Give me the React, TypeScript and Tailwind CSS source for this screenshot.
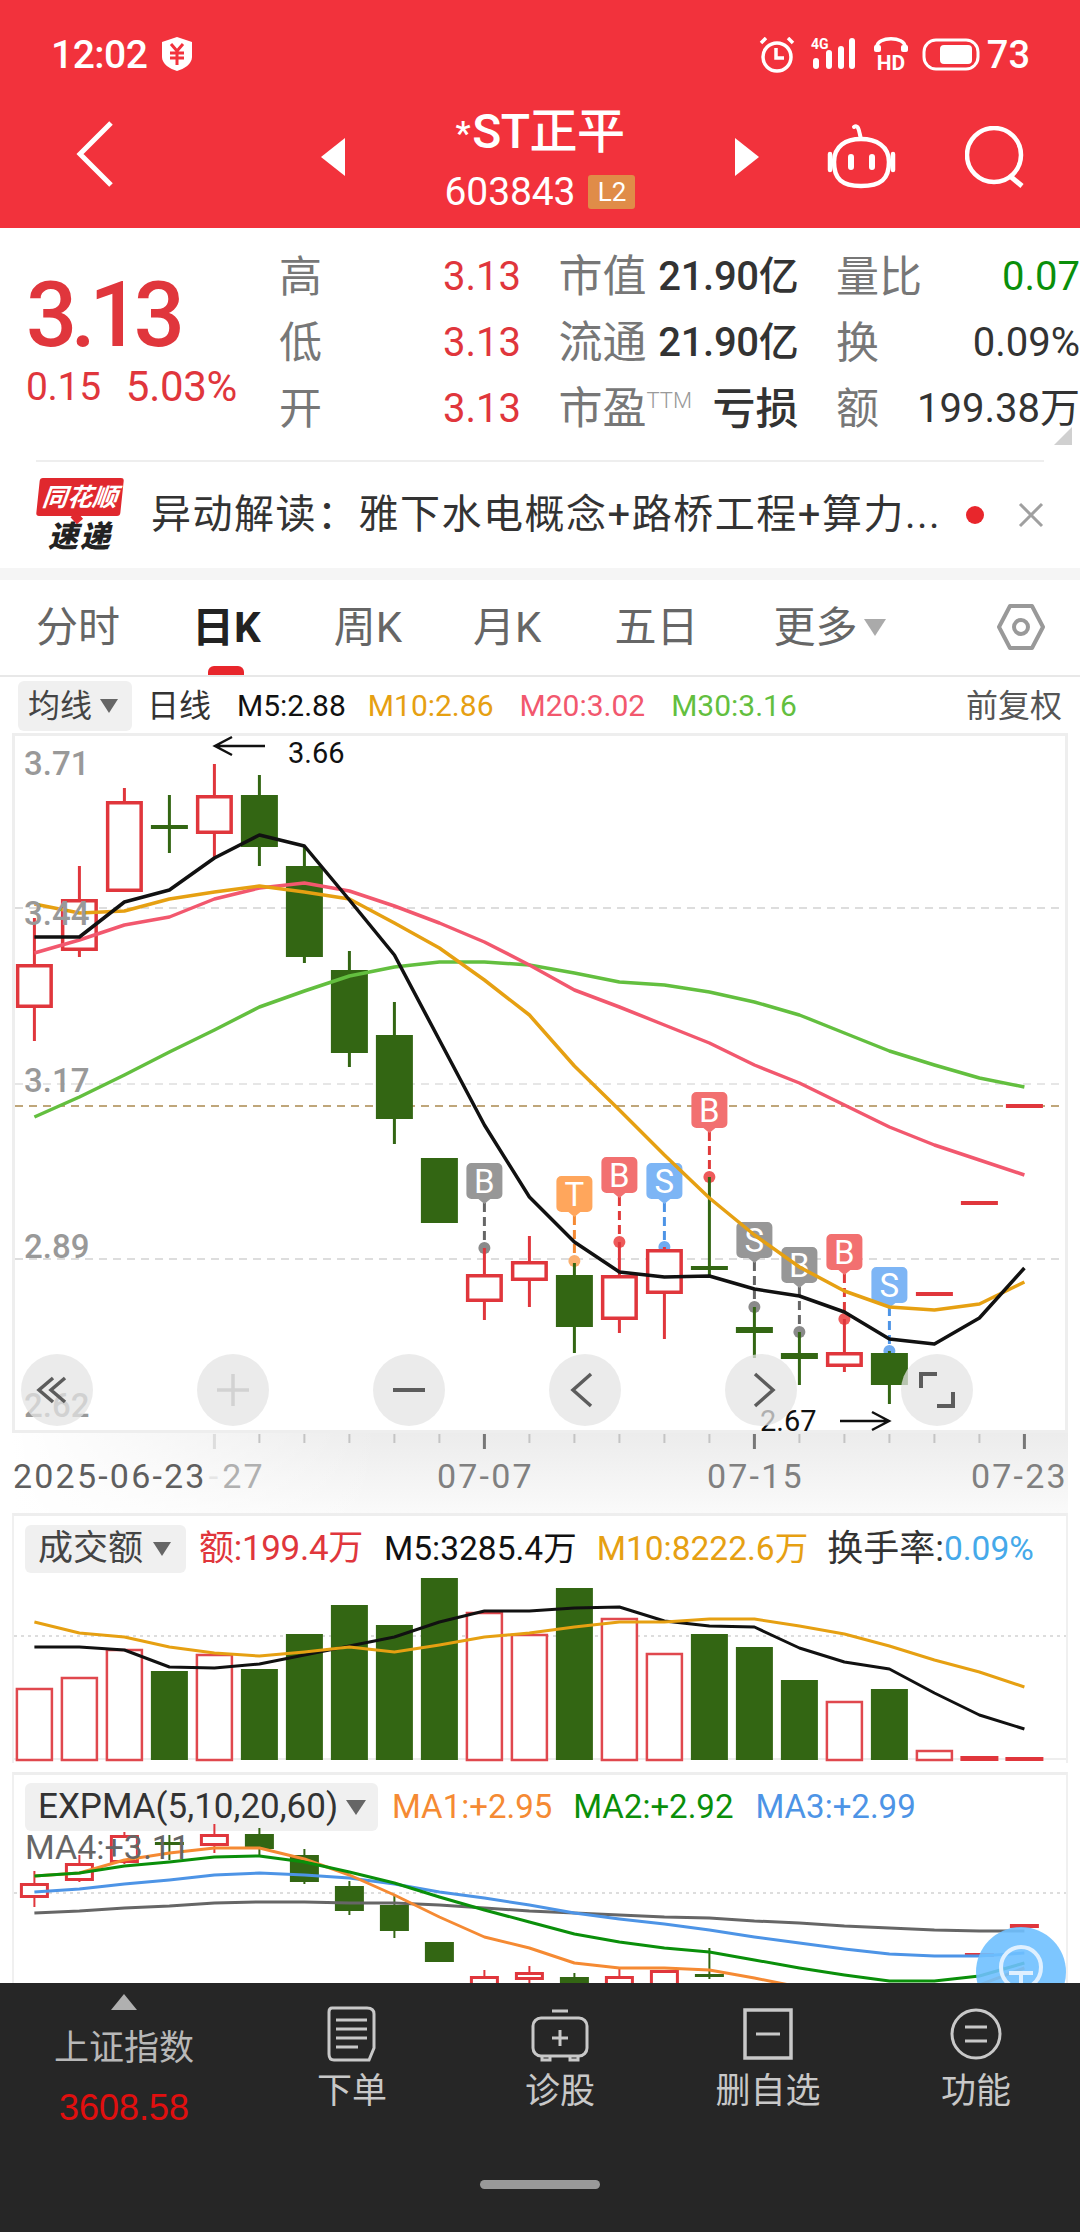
import React from "react";

const X = (i: number) => 34.4 + 45 * i;
const poly = (ys: number[]) => ys.map((y, i) => `${X(i)},${y}`).join(" ");

const RED = "#e0363c";
const GREEN = "#336613";

// index, wick top, wick bottom, body top, body bottom, up
type Candle = [number, number, number, number, number, boolean];

const candles: Candle[] = [
  [0, 918, 1041, 964, 1008, true],
  [1, 866, 957, 899, 951, true],
  [2, 788, 892, 801, 892, true],
  [3, 795, 853, 825, 829, false],
  [4, 764, 857, 795, 834, true],
  [5, 775, 866, 795, 847, false],
  [6, 847, 963, 866, 957, false],
  [7, 951, 1067, 970, 1053, false],
  [8, 1002, 1144, 1035, 1119, false],
  [9, 1158, 1223, 1158, 1223, false],
  [10, 1248, 1320, 1274, 1302, true],
  [11, 1236, 1307, 1261, 1281, true],
  [12, 1263, 1353, 1275, 1327, false],
  [13, 1242, 1333, 1275, 1320, true],
  [14, 1247, 1339, 1249, 1294, true],
  [15, 1177, 1275, 1266, 1270, false],
  [16, 1307, 1358, 1327, 1333, false],
  [17, 1332, 1385, 1353, 1359, false],
  [18, 1319, 1372, 1352, 1367, true],
  [19, 1351, 1404, 1353, 1385, false],
];

const m5 = [937, 937, 902, 890, 858, 835, 846, 900, 955, 1040, 1125, 1197, 1242, 1272, 1277, 1276, 1289, 1296, 1312, 1339, 1344, 1318, 1268];
const m10 = [904, 913, 911, 899, 892, 886, 892, 899, 923, 948, 980, 1015, 1066, 1110, 1155, 1198, 1235, 1267, 1291, 1307, 1310, 1304, 1282];
const m20 = [953, 940, 925, 917, 899, 888, 883, 891, 906, 923, 942, 965, 990, 1007, 1025, 1043, 1065, 1083, 1105, 1127, 1145, 1160, 1175];
const m30 = [1117, 1097, 1075, 1052, 1030, 1007, 991, 976, 967, 962, 962, 965, 973, 982, 985, 992, 1002, 1015, 1033, 1051, 1065, 1078, 1087];

type Mark = { i: number; top: number; dot: number; letter: string; tag: string; dash: string; ball: string };
const TAGS = {
  red: { tag: "#f27070", dash: "#e03a3a", ball: "#ee5a5a" },
  orange: { tag: "#ffa65c", dash: "#f58a33", ball: "#fbb070" },
  blue: { tag: "#7db5f5", dash: "#4d94e6", ball: "#6fabf0" },
  gray: { tag: "#979797", dash: "#666666", ball: "#8a8a8a" },
};
const marks: Mark[] = [
  { i: 10, top: 1163, dot: 1248, letter: "B", ...TAGS.gray },
  { i: 12, top: 1176, dot: 1261, letter: "T", ...TAGS.orange },
  { i: 13, top: 1157, dot: 1242, letter: "B", ...TAGS.red },
  { i: 14, top: 1163, dot: 1247, letter: "S", ...TAGS.blue },
  { i: 15, top: 1092, dot: 1177, letter: "B", ...TAGS.red },
  { i: 16, top: 1222, dot: 1307, letter: "S", ...TAGS.gray },
  { i: 17, top: 1247, dot: 1332, letter: "B", ...TAGS.gray },
  { i: 18, top: 1234, dot: 1319, letter: "B", ...TAGS.red },
  { i: 19, top: 1267, dot: 1351, letter: "S", ...TAGS.blue },
];

// index, top
const volumes: [number, number, boolean][] = [
  [0, 1688, true], [1, 1677, true], [2, 1649, true], [3, 1671, false], [4, 1654, true], [5, 1669, false],
  [6, 1634, false], [7, 1605, false], [8, 1625, false], [9, 1578, false], [10, 1612, true], [11, 1634, true],
  [12, 1588, false], [13, 1618, true], [14, 1653, true], [15, 1634, false], [16, 1647, false], [17, 1680, false],
  [18, 1701, true], [19, 1689, false], [20, 1750, true],
];
const volM5 = [1647, 1647, 1650, 1667, 1668, 1664, 1655, 1646, 1637, 1622, 1611, 1611, 1608, 1607, 1621, 1626, 1627, 1648, 1662, 1669, 1693, 1715, 1729];
const volM10 = [1622, 1633, 1637, 1647, 1653, 1656, 1652, 1647, 1652, 1645, 1637, 1633, 1627, 1622, 1622, 1619, 1619, 1626, 1634, 1646, 1660, 1672, 1687];

const expCandles: Candle[] = [
  [0, 1871, 1907, 1883, 1898, true],
  [1, 1855, 1882, 1863, 1881, true],
  [2, 1832, 1864, 1835, 1863, true],
  [3, 1835, 1860, 1842, 1845, false],
  [4, 1824, 1853, 1834, 1846, true],
  [5, 1828, 1857, 1834, 1849, false],
  [6, 1849, 1884, 1855, 1882, false],
  [7, 1881, 1915, 1886, 1911, false],
  [8, 1895, 1938, 1905, 1931, false],
  [9, 1942, 1962, 1942, 1962, false],
  [10, 1970, 2000, 1976, 1995, true],
  [11, 1966, 1990, 1972, 1980, true],
  [12, 1973, 2000, 1977, 1995, false],
  [13, 1968, 2000, 1976, 1995, true],
  [14, 1970, 2000, 1970, 1995, true],
  [15, 1948, 1979, 1974, 1977, false],
  [20, 1983, 1987, 1983, 1987, true],
  [21, 1953, 1957, 1953, 1957, true],
  [22, 1924, 1928, 1924, 1928, true],
];
const ma1 = [1876, 1873, 1860, 1853, 1848, 1848, 1859, 1875, 1895, 1917, 1937, 1948, 1963, 1968, 1968, 1970, 1978, 1987, 1995, 2000, 1998, 1985, 1968];
const ma2 = [1876, 1873, 1866, 1862, 1857, 1856, 1862, 1872, 1883, 1897, 1910, 1922, 1934, 1942, 1948, 1952, 1960, 1968, 1975, 1981, 1981, 1976, 1963];
const ma3 = [1892, 1889, 1884, 1880, 1875, 1873, 1875, 1878, 1884, 1892, 1898, 1905, 1913, 1919, 1924, 1930, 1937, 1943, 1949, 1954, 1956, 1956, 1953];
const ma4 = [1913, 1911, 1908, 1906, 1903, 1902, 1902, 1903, 1903, 1905, 1908, 1911, 1913, 1915, 1917, 1918, 1921, 1923, 1926, 1928, 1930, 1931, 1931];

function Caret({ color, w, h }: { color: string; w: number; h: number }) {
  return (
    <svg width={w} height={h} viewBox="0 0 10 10" preserveAspectRatio="none" className="block shrink-0">
      <path d="M0 0H10L5 10Z" fill={color} />
    </svg>
  );
}

function StatusBar() {
  return (
    <div className="flex h-[100px] items-start pt-[33px] pl-[51px] text-white">
      <span className="text-[39px] leading-[44px] font-medium tracking-[-0.5px]">12:02</span>
      <svg width="30" height="34" viewBox="0 0 30 34" className="ml-[15px] mt-[4px]">
        <path d="M15 0L30 5V20C30 27 22 32 15 34C8 32 0 27 0 20V5Z" fill="white" />
        <path d="M9 7L15 14L21 7M8 16H22M8 21H22M15 14V28" stroke="#f2323c" strokeWidth="3" fill="none" />
      </svg>
      <div className="ml-auto flex items-start pr-[50px]">
        <svg width="36" height="36" viewBox="0 0 36 36" className="mt-[4px]">
          <circle cx="18" cy="20" r="14" fill="none" stroke="white" strokeWidth="3.5" />
          <path d="M17 11V21H25" fill="none" stroke="white" strokeWidth="3.5" />
          <path d="M2 6L7 1M34 6L29 1" stroke="white" strokeWidth="3.5" />
        </svg>
        <svg width="46" height="36" viewBox="0 0 46 36" className="ml-[16px] mt-[4px] overflow-visible">
          <text x="0" y="12" fontSize="14" fontWeight="700" fill="white">4G</text>
          <rect x="2" y="21" width="6" height="11" rx="3" fill="white" />
          <rect x="15" y="13" width="6" height="19" rx="3" fill="white" />
          <rect x="27" y="9" width="6" height="23" rx="3" fill="white" />
          <rect x="38" y="1" width="6" height="31" rx="3" fill="white" />
        </svg>
        <svg width="36" height="40" viewBox="0 0 36 40" className="ml-[16px] mt-[3px] -mb-[4px] overflow-visible">
          <path d="M4 14V11C4 -0 32 -0 32 11V14" fill="none" stroke="white" strokeWidth="3.5" />
          <rect x="1" y="9" width="7" height="7" rx="2" fill="white" />
          <rect x="28" y="9" width="7" height="7" rx="2" fill="white" />
          <text x="18" y="34" textAnchor="middle" fontSize="21" fontWeight="700" fill="white">HD</text>
        </svg>
        <svg width="58" height="34" viewBox="0 0 58 34" className="ml-[13px] mt-[5px]">
          <rect x="2" y="2" width="54" height="29" rx="12" fill="none" stroke="white" strokeWidth="3" />
          <rect x="18" y="7" width="32" height="19" rx="4" fill="white" />
        </svg>
        <span className="ml-[7px] text-[38px] leading-[44px] font-medium">73</span>
      </div>
    </div>
  );
}

function NavBar() {
  return (
    <div className="flex h-[128px] pl-[76px] text-white">
      <svg width="38" height="66" viewBox="0 0 38 66" className="mt-[21px] shrink-0">
        <path d="M35 2L4 33L35 64" fill="none" stroke="white" strokeWidth="5" />
      </svg>
      <svg width="24" height="38" viewBox="0 0 24 38" className="ml-[207px] mt-[38px] shrink-0">
        <path d="M24 0V38L0 19Z" fill="white" />
      </svg>
      <div className="flex w-[390px] flex-col items-center pt-[6px]">
        <div className="text-[48px] leading-[52px] font-medium tracking-[-0.5px]">
          <span className="relative top-[-3px] mr-[2px] text-[34px]">*</span>ST正平
        </div>
        <div className="mt-[8px] flex items-center">
          <span className="text-[39px] leading-[44px] tracking-[-0.1px]">603843</span>
          <span className="ml-[13px] flex h-[34px] w-[47px] items-center justify-center rounded-[3px] bg-[#e08c48] text-[26px] leading-none">L2</span>
        </div>
      </div>
      <svg width="24" height="38" viewBox="0 0 24 38" className="mt-[38px] shrink-0">
        <path d="M0 0V38L24 19Z" fill="white" />
      </svg>
      <svg width="72" height="66" viewBox="0 0 72 66" className="ml-[67px] mt-[24px] shrink-0">
        <path d="M28 3C33 0 33 8 35 15" fill="none" stroke="white" strokeWidth="4" strokeLinecap="round" />
        <path d="M8 38C8 22 20 15 35 15C50 15 63 22 63 38C63 55 55 62 35 62C16 62 8 55 8 38Z" fill="none" stroke="white" strokeWidth="4.5" />
        <path d="M4 30V46M67 30V46" stroke="white" strokeWidth="4.5" strokeLinecap="round" />
        <path d="M25 33V43M46 33V43" stroke="white" strokeWidth="6" strokeLinecap="round" />
      </svg>
      <svg width="62" height="62" viewBox="0 0 62 62" className="ml-[67px] mt-[26px] shrink-0">
        <circle cx="29" cy="29" r="27" fill="none" stroke="white" strokeWidth="4.5" />
        <path d="M45 50L57 60" stroke="white" strokeWidth="5" />
      </svg>
    </div>
  );
}

function QuoteCell({ label, value, color }: { label: string; value: string; color: string }) {
  return (
    <div className="flex items-center justify-between">
      <span className="text-[43px] leading-none text-[#777777]">{label}</span>
      <span className="text-[40px] leading-none" style={{ color }}>
        {value}
      </span>
    </div>
  );
}

function QuoteBlock() {
  return (
    <div className="relative flex h-[232px]">
      <div className="w-[279px] pl-[26px] pt-[43px] text-[#e0363c]">
        <div className="text-[90px] leading-[90px] font-medium tracking-[-6.5px]">3.13</div>
        <div className="mt-[3px] flex text-[39px] leading-[46px] tracking-[-0.3px]">
          <span>0.15</span>
          <span className="ml-[25px] text-[42px]">5.03%</span>
        </div>
      </div>
      <div className="grid grid-cols-[242px_240px_244px] grid-rows-[66px_66px_66px] gap-x-[37.5px] pt-[16px]">
        <QuoteCell label="高" value="3.13" color="#e0363c" />
        <div className="flex items-center justify-between">
          <span className="text-[44px] leading-none text-[#777777]">市值</span>
          <span className="text-[40px] leading-none font-medium tracking-[-0.3px] text-[#333333]">21.90亿</span>
        </div>
        <QuoteCell label="量比" value="0.07" color="#0a8f0a" />
        <QuoteCell label="低" value="3.13" color="#e0363c" />
        <div className="flex items-center justify-between">
          <span className="text-[44px] leading-none text-[#777777]">流通</span>
          <span className="text-[40px] leading-none font-medium tracking-[-0.3px] text-[#333333]">21.90亿</span>
        </div>
        <QuoteCell label="换" value="0.09%" color="#333333" />
        <QuoteCell label="开" value="3.13" color="#e0363c" />
        <div className="flex items-center justify-between">
          <span className="flex items-start text-[44px] leading-none text-[#777777]">
            市盈<span className="mt-[3px] text-[22px] leading-none font-light text-[#999999]">TTM</span>
          </span>
          <span className="text-[43px] leading-none font-medium text-[#333333]">亏损</span>
        </div>
        <QuoteCell label="额" value="199.38万" color="#333333" />
      </div>
      <svg width="18" height="18" viewBox="0 0 18 18" className="absolute right-[8px] bottom-[15px]">
        <path d="M18 0V18H0Z" fill="#d0d0d0" />
      </svg>
    </div>
  );
}

function NewsRow() {
  return (
    <div className="mx-[36px] flex h-[108px] items-center border-t-2 border-t-[#eeeeee]">
      <div className="flex w-[88px] shrink-0 flex-col items-center">
        <div className="relative flex h-[38px] w-[84px] -skew-x-[6deg] items-center justify-center rounded-[3px] bg-[#e0282e]">
          <span className="text-[25px] leading-none font-bold italic text-white">同花顺</span>
          <div className="absolute top-[36px] left-[36px] h-[8px] w-[10px] rotate-45 bg-[#e0282e]" />
        </div>
        <span className="mt-[5px] text-[30px] leading-[32px] font-black italic tracking-[2px] text-[#222222]">速递</span>
      </div>
      <span className="ml-[27px] w-[800px] whitespace-nowrap text-[40px] leading-none tracking-[1.5px] text-[#333333]">异动解读：雅下水电概念+路桥工程+算力...</span>
      <div className="ml-[17px] size-[18px] shrink-0 rounded-full bg-[#e8262c]" />
      <svg width="26" height="26" viewBox="0 0 26 26" className="ml-[34px] shrink-0">
        <path d="M2 2L24 24M24 2L2 24" stroke="#a0a0a0" strokeWidth="3" />
      </svg>
    </div>
  );
}

function Tabs() {
  return (
    <div className="relative flex h-[97px] items-center border-b-2 border-b-[#e8e8e8] text-[42px] leading-none text-[#666666]">
      <span className="ml-[36px]">分时</span>
      <span className="relative ml-[72px] font-bold text-[#222222]">
        日K
        <span className="absolute -bottom-[26px] left-[16px] h-[9px] w-[36px] rounded-t-[6px] bg-[#e8262c]" />
      </span>
      <span className="ml-[73px]">周K</span>
      <span className="ml-[71px]">月K</span>
      <span className="ml-[73px]">五日</span>
      <span className="ml-[75px]">更多</span>
      <span className="ml-[7px]"><Caret color="#aaaaaa" w={22} h={17} /></span>
      <svg width="48" height="46" viewBox="0 0 48 46" className="ml-[111px] mt-[-2px]">
        <path d="M13 2H35L46 23L35 44H13L2 23Z" fill="none" stroke="#999999" strokeWidth="4" strokeLinejoin="round" />
        <circle cx="24" cy="23" r="7" fill="none" stroke="#999999" strokeWidth="4" />
      </svg>
    </div>
  );
}

function IndicatorRow() {
  return (
    <div className="flex h-[56px] items-center pt-[1px] text-[30px] leading-none">
      <div className="ml-[18px] flex h-[50px] w-[114px] items-center rounded-[6px] bg-[#f0f0f0] pl-[10px] text-[#444444]">
        <span className="text-[32px]">均线</span>
        <span className="ml-[8px]"><Caret color="#666666" w={18} h={14} /></span>
      </div>
      <span className="ml-[15px] text-[32px] text-[#333333]">日线</span>
      <span className="ml-[26px] text-[#111111]">M5:2.88</span>
      <span className="ml-[22px] text-[#e6a012]">M10:2.86</span>
      <span className="ml-[26px] text-[#f2586e]">M20:3.02</span>
      <span className="ml-[26px] text-[#63bf3f]">M30:3.16</span>
      <span className="ml-auto mr-[18px] text-[32px] text-[#555555]">前复权</span>
    </div>
  );
}

function Candles({ data, half, stroke, wick }: { data: Candle[]; half: number; stroke: number; wick: number }) {
  return (
    <>
      {data.map(([i, wt, wb, bt, bb, up]) => {
        const x = X(i);
        const color = up ? RED : GREEN;
        const flat = bb - bt <= 6;
        return (
          <g key={i}>
            {wb > wt && <line x1={x} x2={x} y1={wt} y2={wb} stroke={color} strokeWidth={wick} />}
            {up && !flat ? (
              <rect x={x - half + stroke / 2} y={bt + stroke / 2} width={half * 2 - stroke} height={bb - bt - stroke} fill="white" stroke={color} strokeWidth={stroke} />
            ) : (
              <rect x={x - half} y={bt} width={half * 2} height={bb - bt} fill={color} />
            )}
          </g>
        );
      })}
    </>
  );
}

function MainChart() {
  return (
    <div className="relative mx-[12px] h-[700px] w-[1056px] border-[3px] border-[#eeeeee]">
      <svg width="1050" height="694" viewBox="15 736 1050 694" className="block overflow-visible">
        <line x1="15" x2="1065" y1="908" y2="908" stroke="#dddddd" strokeWidth="2" strokeDasharray="8 6" />
        <line x1="15" x2="1065" y1="1084" y2="1084" stroke="#e6e6e6" strokeWidth="2" strokeDasharray="8 6" />
        <line x1="15" x2="1065" y1="1259" y2="1259" stroke="#dddddd" strokeWidth="2" strokeDasharray="8 6" />
        <line x1="15" x2="1065" y1="1106" y2="1106" stroke="#bfa67a" strokeWidth="2" strokeDasharray="8 6" />
        {marks.map((m) => {
          const x = X(m.i);
          return (
            <g key={m.i}>
              <line x1={x} x2={x} y1={m.top + 40} y2={m.dot} stroke={m.dash} strokeWidth="3" strokeDasharray="9 5" />
              <circle cx={x} cy={m.dot} r="6" fill={m.ball} />
              <path d={`M${x - 18} ${m.top + 5}a5 5 0 0 1 5 -5h26a5 5 0 0 1 5 5v26a5 5 0 0 1 -5 5h-7l-6 5l-6 -5h-7a5 5 0 0 1 -5 -5Z`} fill={m.tag} />
              <text x={x} y={m.top + 30} textAnchor="middle" fontSize="33" fill="white">{m.letter}</text>
            </g>
          );
        })}
        <Candles data={candles} half={18.5} stroke={3.5} wick={3} />
        <rect x={X(20) - 18.5} y="1292" width="37" height="4" fill={RED} />
        <rect x={X(21) - 18.5} y="1201" width="37" height="4" fill={RED} />
        <rect x={X(22) - 18.5} y="1104" width="37" height="4" fill={RED} />
        <polyline points={poly(m30)} fill="none" stroke="#63bf3f" strokeWidth="3.5" strokeLinejoin="round" />
        <polyline points={poly(m20)} fill="none" stroke="#f2586e" strokeWidth="3.5" strokeLinejoin="round" />
        <polyline points={poly(m10)} fill="none" stroke="#e6a012" strokeWidth="3.5" strokeLinejoin="round" />
        <polyline points={poly(m5)} fill="none" stroke="#111111" strokeWidth="3.5" strokeLinejoin="round" />
        <g fontSize="33" fontWeight="500" fill="#999999">
          <text x="24" y="775">3.71</text>
          <text x="24" y="925">3.44</text>
          <text x="24" y="1092">3.17</text>
          <text x="24" y="1258">2.89</text>
          <text x="24" y="1417">2.62</text>
        </g>
        <path d="M265 746H215M232 737L215 746L232 755" fill="none" stroke="#111111" strokeWidth="2.5" />
        <text x="288" y="763" fontSize="29" fill="#111111">3.66</text>
        <text x="760" y="1431" fontSize="29" fill="#111111">2.67</text>
        <path d="M840 1421H889M872 1412L889 1421L872 1430" fill="none" stroke="#111111" strokeWidth="2.5" />
      </svg>
      <div className="absolute top-[618px] left-[6px] flex gap-[104px]">
        <ChartButton><path d="M20 12L6 24L20 36M32 12L18 24L32 36" /></ChartButton>
        <ChartButton light><path d="M24 8V40M8 24H40" /></ChartButton>
        <ChartButton><path d="M8 24H40" strokeWidth="4" /></ChartButton>
        <ChartButton><path d="M30 8L12 24L30 40" /></ChartButton>
        <ChartButton><path d="M18 8L36 24L18 40" /></ChartButton>
        <ChartButton><path d="M8 22V8H24M24 40H40V26" strokeWidth="4" /></ChartButton>
      </div>
    </div>
  );
}

function ChartButton({ children, light }: { children: React.ReactNode; light?: boolean }) {
  return (
    <div className="flex size-[72px] items-center justify-center rounded-full bg-[#e4e4e4]/75">
      <svg width="48" height="48" viewBox="0 0 48 48" fill="none" stroke={light ? "#d2d2d2" : "#5c5c5c"} strokeWidth="3.5">
        {children}
      </svg>
    </div>
  );
}

function DateAxis() {
  const ticks = Array.from({ length: 19 }, (_, k) => k + 4);
  return (
    <div className="mx-[12px] h-[80px] w-[1056px] bg-[linear-gradient(to_right,#ffffff,rgba(255,255,255,0)_35%),linear-gradient(to_bottom,#ececec,#fafafa)]">
      <svg width="1056" height="18" viewBox="12 0 1056 18" className="block">
        {ticks.map((i) => {
          const major = i === 4 || i === 10 || i === 16 || i === 22;
          return (
            <line
              key={i}
              x1={X(i)}
              x2={X(i)}
              y1="1"
              y2={major ? 16 : 10}
              stroke={i === 4 ? "#dddddd" : major ? "#777777" : "#c4c4c4"}
              strokeWidth={major ? 3 : 2}
            />
          );
        })}
      </svg>
      <div className="mt-[8px] ml-[1px] flex text-[34px] leading-[34px] tracking-[2.2px] text-[#808080]">
        <span className="w-[424px] text-[#5f5f5f]">
          2025-06-23<span className="mx-[2px] text-[#e6e6e6]">-</span><span className="text-[#b0b0b0]">27</span>
        </span>
        <span className="w-[270px]">07-07</span>
        <span className="w-[264px]">07-15</span>
        <span>07-23</span>
      </div>
    </div>
  );
}

function VolumePanel() {
  return (
    <div className="mx-[12px] h-[250px] w-[1056px] border-x-2 border-t-[3px] border-x-[#f0f0f0] border-t-[#eeeeee]">
      <div className="flex h-[57px] items-end text-[33.5px] leading-[48px]">
        <div className="ml-[11px] flex h-[48px] w-[161px] items-center rounded-[6px] bg-[#f0f0f0] pl-[13px] text-[35px] text-[#444444]">
          成交额
          <span className="ml-[10px]"><Caret color="#666666" w={18} h={14} /></span>
        </div>
        <span className="ml-[13px] text-[35px] tracking-[-0.3px] text-[#e0363c]">额:199.4万</span>
        <span className="ml-[21px] text-[#111111]">M5:3285.4万</span>
        <span className="ml-[20px] text-[#e6a012]">M10:8222.6万</span>
        <span className="ml-[19px] text-[36px] text-[#333333]">换手率:</span>
        <span className="text-[#45a9ea]">0.09%</span>
      </div>
      <svg width="1052" height="190" viewBox="14 1573 1052 190" className="block">
        <line x1="14" x2="1066" y1="1636" y2="1636" stroke="#dddddd" strokeWidth="2" strokeDasharray="3 4" />
        <line x1="14" x2="1066" y1="1759" y2="1759" stroke="#eeeeee" strokeWidth="2" />
        {volumes.map(([i, top, up]) =>
          up ? (
            <rect key={i} x={X(i) - 17.5} y={top + 1} width="35" height={1759 - top} fill="white" stroke="#e0484e" strokeWidth="2.5" />
          ) : (
            <rect key={i} x={X(i) - 18.5} y={top} width="37" height={1760 - top} fill={GREEN} />
          )
        )}
        <rect x={X(21) - 19} y="1756" width="38" height="5" fill={RED} />
        <rect x={X(22) - 19} y="1757" width="38" height="4" fill={RED} />
        <polyline points={poly(volM5)} fill="none" stroke="#111111" strokeWidth="3" strokeLinejoin="round" />
        <polyline points={poly(volM10)} fill="none" stroke="#e6a012" strokeWidth="3" strokeLinejoin="round" />
      </svg>
    </div>
  );
}

function ExpmaPanel() {
  return (
    <div className="relative mx-[12px] mt-[9px] h-[211px] w-[1056px] overflow-hidden border-x-2 border-t-[3px] border-x-[#f0f0f0] border-t-[#eeeeee]">
      <div className="flex h-[56px] items-end text-[33px] leading-[48px]">
        <div className="ml-[11px] flex h-[48px] w-[353px] items-center rounded-[6px] bg-[#f0f0f0] pl-[13px] text-[35px] text-[#333333]">
          EXPMA(5,10,20,60)
          <span className="ml-[8px]"><Caret color="#666666" w={20} h={15} /></span>
        </div>
        <span className="ml-[14px] text-[#f58a33]">MA1:+2.95</span>
        <span className="ml-[21px] text-[#0a8f0a]">MA2:+2.92</span>
        <span className="ml-[22px] text-[#4d94e6]">MA3:+2.99</span>
      </div>
      <svg width="1052" height="152" viewBox="14 1831 1052 152" className="block overflow-visible">
        <line x1="14" x2="1066" y1="1893" y2="1893" stroke="#dddddd" strokeWidth="2" strokeDasharray="3 4" />
        <Candles data={expCandles} half={14.5} stroke={3} wick={2} />
        <polyline points={poly(ma4)} fill="none" stroke="#666666" strokeWidth="3" strokeLinejoin="round" />
        <polyline points={poly(ma3)} fill="none" stroke="#4d94e6" strokeWidth="3" strokeLinejoin="round" />
        <polyline points={poly(ma1)} fill="none" stroke="#f58a33" strokeWidth="3" strokeLinejoin="round" />
        <polyline points={poly(ma2)} fill="none" stroke="#0a8f0a" strokeWidth="3" strokeLinejoin="round" />
        <text x="25" y="1859" fontSize="34" fill="#666666">MA4:+3.11</text>
      </svg>
      <div className="absolute top-[152px] right-[0px] flex h-[90px] w-[90px] justify-center rounded-full bg-[#6fc0ff]/90">
        <svg width="52" height="70" viewBox="0 0 52 70" className="mt-[14px]">
          <path d="M15 44C8 39 6 33 6 26A20 20 0 0 1 46 26C46 33 44 39 37 44" fill="none" stroke="#dff0ff" strokeWidth="4" />
          <path d="M14 32H38M26 32V60" stroke="#dff0ff" strokeWidth="4" fill="none" />
        </svg>
      </div>
    </div>
  );
}

function FootItem({ label, children }: { label: string; children: React.ReactNode }) {
  return (
    <div className="flex w-[208px] flex-col items-center pt-[23px]">
      <svg width="60" height="56" viewBox="0 0 60 56" fill="none" stroke="#c8c8c8" strokeWidth="3">
        {children}
      </svg>
      <span className="mt-[10px] text-[35px] leading-[40px] text-[#c8c8c8]">{label}</span>
    </div>
  );
}

function Footer() {
  return (
    <div className="relative z-10 flex h-[249px] bg-[#262626]">
      <div className="flex w-[248px] flex-col items-center pt-[11px]">
        <svg width="26" height="16" viewBox="0 0 26 16" className="block">
          <path d="M13 0L26 16H0Z" fill="#b0b0b0" />
        </svg>
        <span className="mt-[19px] text-[35px] leading-[40px] text-[#b8b8b8]">上证指数</span>
        <span className="mt-[19px] font-[family-name:'Liberation_Sans',sans-serif] text-[36px] leading-[40px] text-[#e10f0f]">3608.58</span>
      </div>
      <FootItem label="下单">
        <path d="M10 2H45Q52 2 52 8V42L47 54H12Q7 54 7 48V6Q7 2 10 2Z" />
        <path d="M14 14H45M14 23H45M14 32H45M14 41H36" />
      </FootItem>
      <FootItem label="诊股">
        <path d="M22 5H38" />
        <rect x="3" y="12" width="54" height="38" rx="8" />
        <path d="M30 24V40M22 32H38M12 50V54H20V50M40 50V54H48V50" />
      </FootItem>
      <FootItem label="删自选">
        <rect x="7" y="4" width="46" height="48" strokeWidth="3.5" />
        <path d="M18 28H42" />
      </FootItem>
      <FootItem label="功能">
        <circle cx="30" cy="28" r="24" />
        <path d="M19 21H41M19 35H41" />
      </FootItem>
      <div className="absolute top-[197px] left-[480px] h-[9px] w-[120px] rounded-full bg-[#999999]" />
    </div>
  );
}

export default function App() {
  return (
    <div className="flex h-[2232px] w-[1080px] flex-col overflow-hidden bg-white font-[family-name:Roboto,'Noto_Sans_CJK_SC',sans-serif]">
      <div className="h-[228px] shrink-0 bg-[#f2323c]">
        <StatusBar />
        <NavBar />
      </div>
      <QuoteBlock />
      <NewsRow />
      <div className="h-[12px] bg-[#f5f5f5]" />
      <Tabs />
      <IndicatorRow />
      <MainChart />
      <DateAxis />
      <VolumePanel />
      <ExpmaPanel />
      <Footer />
    </div>
  );
}
